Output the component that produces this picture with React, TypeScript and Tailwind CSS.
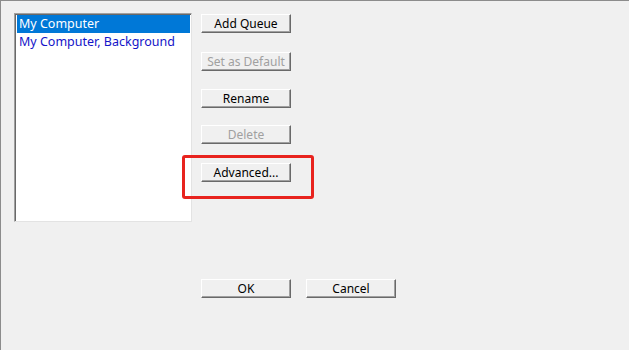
import React from "react";

const font = { fontFamily: '"Noto Sans", "Liberation Sans", sans-serif' };

function Btn({ label, disabled, className = "" }: { label: string; disabled?: boolean; className?: string }) {
  return (
    <button
      className={
        "flex h-[19px] w-[90px] items-center justify-center border border-t-white border-l-white border-r-[#696969] border-b-[#696969] bg-[#f0f0f0] text-[12px] leading-none shadow-[inset_-1px_-1px_0_#a0a0a0] " +
        (disabled ? "text-[#a0a0a0] " : "text-black ") +
        className
      }
    >
      {label}
    </button>
  );
}

export default function App() {
  return (
    <div
      className="relative h-[350px] w-[629px] overflow-hidden border-t border-l border-[#8c8c8c] bg-[#f0f0f0] pl-[13px] pt-[12px]"
      style={font}
    >
      <div className="flex gap-[9px]">
        {/* Queue list */}
        <div className="h-[209px] w-[178px] border border-t-[#a0a0a0] border-l-[#a0a0a0] border-r-[#e3e3e3] border-b-[#e3e3e3] bg-white shadow-[inset_1px_1px_0_#696969] pl-[2px] pt-[1px] pr-[1px]">
          <div className="h-[18px] bg-[#0078d7] pl-[2px] text-[12.5px] leading-[18px] text-white">My Computer</div>
          <div className="h-[18px] pl-[2px] text-[12.5px] leading-[18px] text-[#1414c8]">My Computer, Background</div>
        </div>

        {/* Actions */}
        <div className="flex flex-col">
          <Btn label="Add Queue" className="mt-[1px]" />
          <Btn label="Set as Default" disabled className="mt-[19px]" />
          <Btn label="Rename" className="mt-[18px]" />
          <Btn label="Delete" disabled className="mt-[17px]" />
          <Btn label="Advanced..." className="mt-[19px]" />
        </div>
      </div>

      <div className="mt-[57px] flex gap-[15px] pl-[187px]">
        <Btn label="OK" />
        <Btn label="Cancel" />
      </div>

      {/* highlight */}
      <div className="absolute left-[181px] top-[154px] h-[44px] w-[132px] rounded-[3px] border-[3px] border-[#e8231e]" />
    </div>
  );
}
